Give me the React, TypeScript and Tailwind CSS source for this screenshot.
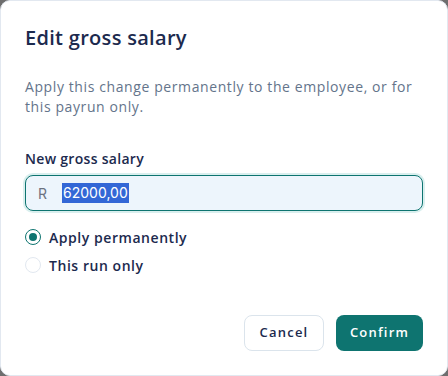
import React from "react";

export default function App() {
  return (
    <div className="w-[448px] h-[376px] bg-[#6e6e6e]" style={{ fontFamily: '"Open Sans", sans-serif' }}>
      <div className="w-full h-full bg-white rounded-[10px] border border-[#e2e8f0] flex flex-col px-6 pt-[22px] pb-6">
        <h2 className="text-[20px] leading-[30px] font-semibold text-[#1c2a4e] tracking-[0.3px]">Edit gross salary</h2>
        <p className="mt-[24px] text-[14px] leading-[20px] text-[#64748b] tracking-[0.6px]">
          Apply this change permanently to the employee, or for<br />this payrun only.
        </p>
        <label className="mt-[32px] text-[14px] leading-[20px] font-semibold text-[#1c2a4e] tracking-[0.3px]">New gross salary</label>
        <div className="mt-[6px] h-[36px] rounded-[8px] border border-[#0e7470] bg-[#edf5fc] ring-2 ring-[#d9efee] flex items-center px-3">
          <span className="text-[14px] text-[#6b7280]" style={{ fontFamily: 'Inter, sans-serif' }}>R</span>
          <span className="ml-[15px] text-[14px] leading-[20px] text-white bg-[#3367d6] px-[1px]" style={{ fontFamily: 'Inter, sans-serif' }}>62000,00</span>
        </div>
        <div className="mt-[16px] flex flex-col gap-[8px]">
          <div className="flex items-center gap-2 h-[20px]">
            <span className="w-4 h-4 rounded-full border border-[#0e7470] flex items-center justify-center">
              <span className="w-2 h-2 rounded-full bg-[#0e7470]" />
            </span>
            <span className="text-[14px] font-semibold text-[#1c2a4e] tracking-[0.55px]">Apply permanently</span>
          </div>
          <div className="flex items-center gap-2 h-[20px]">
            <span className="w-4 h-4 rounded-full border border-[#e2e8f0] bg-white" />
            <span className="text-[14px] font-semibold text-[#1c2a4e] tracking-[0.55px]">This run only</span>
          </div>
        </div>
        <div className="mt-auto flex justify-end gap-3">
          <button className="h-[36px] w-[80px] rounded-[8px] border border-[#dbe4ec] bg-white text-[13px] font-semibold tracking-[1.2px] text-[#1c2a4e]">Cancel</button>
          <button className="h-[36px] w-[87px] rounded-[8px] bg-[#0e7470] text-[13px] font-semibold tracking-[1.2px] text-white">Confirm</button>
        </div>
      </div>
    </div>
  );
}
